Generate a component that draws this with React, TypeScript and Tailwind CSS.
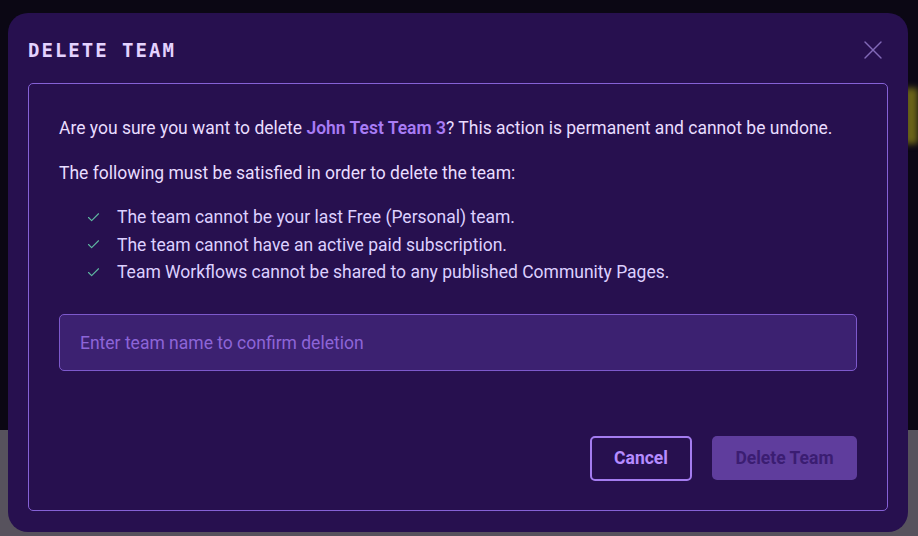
import { Check, X } from 'lucide-react'

const rules = [
  'The team cannot be your last Free (Personal) team.',
  'The team cannot have an active paid subscription.',
  'Team Workflows cannot be shared to any published Community Pages.',
]

export default function App() {
  return (
    <div className="relative h-[536px] w-[918px] overflow-hidden bg-[#0b0714] font-['Roboto',sans-serif]">
      {/* blurred page behind the overlay */}
      <div className="absolute bottom-0 left-0 right-0 h-[106px] bg-[#57525d]" />
      <div className="absolute right-0 top-[88px] h-[56px] w-[14px] bg-[#6b6418] blur-[3px]" />

      <div className="relative pl-[8px] pt-[13px]">
        <div className="flex h-[519px] w-[900px] flex-col rounded-[20px] bg-[#27104f] px-[20px] pb-[21px]">
          <div className="flex h-[70px] items-center justify-between pt-[4px]">
            <h2 className="font-['DejaVu_Sans_Mono',monospace] text-[19px] font-bold uppercase leading-none tracking-[2px] text-[#e4d2ff]">
              Delete Team
            </h2>
            <button className="-mr-[1px] text-[#8269b8]">
              <X size={32} strokeWidth={1} />
            </button>
          </div>

          <div className="flex flex-1 flex-col rounded-[5px] border border-[#8561d6] px-[30px] pb-[29px] pt-[32px]">
            <p className="text-[17.5px] leading-[24px] text-[#e9ddff]">
              Are you sure you want to delete{' '}
              <span className="font-semibold text-[#a87cf5]">John Test Team 3</span>? This action is
              permanent and cannot be undone.
            </p>
            <p className="mt-[21px] text-[17.5px] leading-[24px] text-[#e9ddff]">
              The following must be satisfied in order to delete the team:
            </p>
            <ul className="mt-[20px] flex flex-col gap-[3.5px]">
              {rules.map((r) => (
                <li key={r} className="flex items-center text-[17.5px] leading-[24px] text-[#ddd0ff]">
                  <Check size={15} strokeWidth={1.8} className="ml-[27px] mr-[16px] text-[#5fb8a1]" />
                  {r}
                </li>
              ))}
            </ul>
            <input
              placeholder="Enter team name to confirm deletion"
              className="mt-[30px] h-[57px] w-full rounded-[5px] border border-[#7d59cc] bg-[#3c2171] px-[20px] text-[17.5px] text-[#e9ddff] outline-none placeholder:text-[#8d65d8]"
            />
            <div className="mt-auto flex justify-end gap-[20px]">
              <button className="h-[45px] w-[102px] rounded-[5px] border-2 border-[#a47cf0] text-[17.5px] font-bold text-[#b58cff]">
                Cancel
              </button>
              <button className="h-[44px] w-[145px] rounded-[5px] bg-[#5f3d9d] text-[17.5px] font-bold text-[#3b1d72]">
                Delete Team
              </button>
            </div>
          </div>
        </div>
      </div>
    </div>
  )
}
